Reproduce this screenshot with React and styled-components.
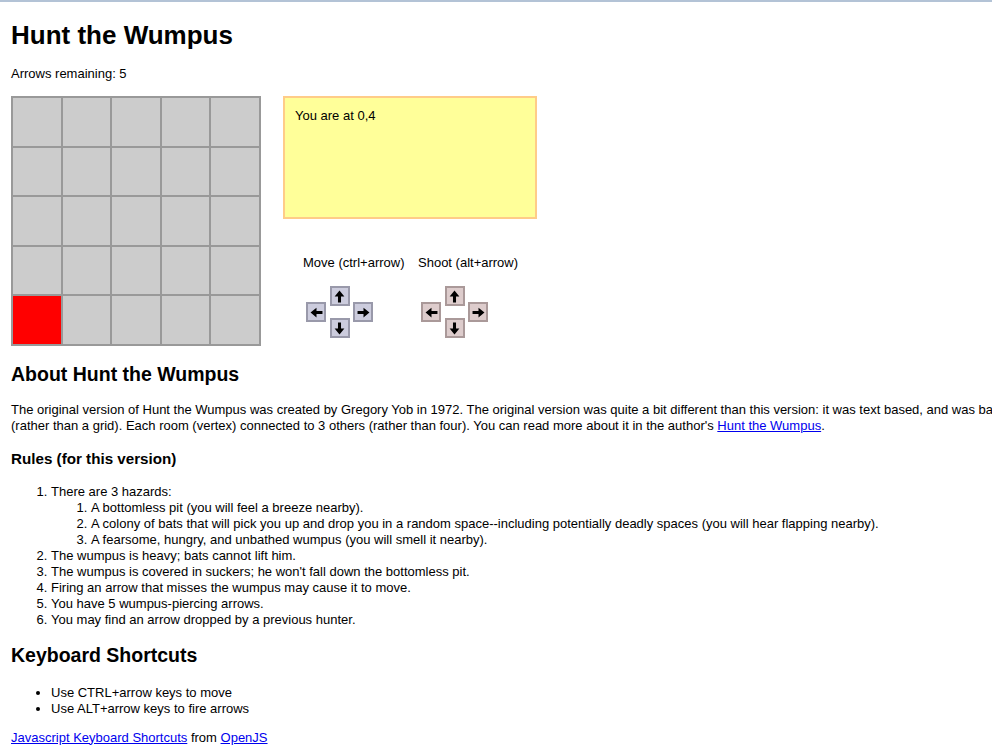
import React from 'react'
import styled, { createGlobalStyle } from 'styled-components'

const GlobalStyle = createGlobalStyle`
    html, body {
        margin: 0;
        padding: 0;
        overflow: hidden;
        background: #fff;
    }
    body {
        border-top: 2px solid #b3c3d6;
        font-family: "Liberation Sans", Arial, sans-serif;
        font-size: 13px;
        line-height: 16px;
        color: #000;
    }
`

const SIZE = 5
const here = { x: 0, y: 4 }

const App = () => {
  const cells = []
  for (let y = 0; y < SIZE; y++) {
    for (let x = 0; x < SIZE; x++) {
      cells.push(<Cell key={x + '-' + y} $current={x === here.x && y === here.y} />)
    }
  }

  return (
    <>
      <GlobalStyle />
      <Page>
        <Title>Hunt the Wumpus</Title>
        <Status>Arrows remaining: 5</Status>

        <GameRow>
          <Board>{cells}</Board>
          <Side>
            <Message>You are at {here.x},{here.y}</Message>
            <Controls>
              <ControlGroup>
                <ControlLabel>Move (ctrl+arrow)</ControlLabel>
                <DirPad kind="move" />
              </ControlGroup>
              <ControlGroup>
                <ControlLabel>Shoot (alt+arrow)</ControlLabel>
                <DirPad kind="shoot" />
              </ControlGroup>
            </Controls>
          </Side>
        </GameRow>

        <SectionHeading>About Hunt the Wumpus</SectionHeading>
        <Paragraph>
          The original version of Hunt the Wumpus was created by Gregory Yob in 1972. The original version was quite a bit
          different than this version: it was text based, and was based on a dodecahedron (rather than a grid). Each room
          (vertex) connected to 3 others (rather than four). You can read more about it in the author's{' '}
          <Link href="#">Hunt the Wumpus</Link>.
        </Paragraph>

        <SubHeading>Rules (for this version)</SubHeading>
        <RuleList>
          <li>
            There are 3 hazards:
            <NestedList>
              <li>A bottomless pit (you will feel a breeze nearby).</li>
              <li>A colony of bats that will pick you up and drop you in a random space--including potentially deadly spaces (you will hear flapping nearby).</li>
              <li>A fearsome, hungry, and unbathed wumpus (you will smell it nearby).</li>
            </NestedList>
          </li>
          <li>The wumpus is heavy; bats cannot lift him.</li>
          <li>The wumpus is covered in suckers; he won't fall down the bottomless pit.</li>
          <li>Firing an arrow that misses the wumpus may cause it to move.</li>
          <li>You have 5 wumpus-piercing arrows.</li>
          <li>You may find an arrow dropped by a previous hunter.</li>
        </RuleList>

        <ShortcutHeading>Keyboard Shortcuts</ShortcutHeading>
        <BulletList>
          <li>Use CTRL+arrow keys to move</li>
          <li>Use ALT+arrow keys to fire arrows</li>
        </BulletList>

        <Footer>
          <Link href="#">Javascript Keyboard Shortcuts</Link> from <Link href="#">OpenJS</Link>
        </Footer>
      </Page>
    </>
  )
}

const Arrow = ({ turn }) => (
  <svg width="13" height="13" viewBox="0 0 12 12" style={{ transform: `rotate(${turn}deg)` }}>
    <path d="M6 0.5 L10.5 6 H7.4 V11.5 H4.6 V6 H1.5 Z" fill="#000" />
  </svg>
)

const DirPad = ({ kind }) => (
  <Pad>
    <PadButton $kind={kind} $col={2} $row="1 / 6"><Arrow turn={0} /></PadButton>
    <PadButton $kind={kind} $col={1} $row="5 / 10"><Arrow turn={-90} /></PadButton>
    <PadButton $kind={kind} $col={3} $row="5 / 10"><Arrow turn={90} /></PadButton>
    <PadButton $kind={kind} $col={2} $row="9 / 14"><Arrow turn={180} /></PadButton>
  </Pad>
)

export default App

const Page = styled.div`
    width: 1140px;
    padding: 0 0 20px 11px;
`

const Title = styled.h1`
    margin: 18px 0 0;
    font-size: 26px;
    line-height: 30px;
    font-weight: bold;
`

const Status = styled.p`
    margin: 16px 0 0;
`

const GameRow = styled.div`
    display: flex;
    align-items: flex-start;
    gap: 22px;
    margin-top: 14px;
`

const Board = styled.div`
    display: grid;
    grid-template-columns: repeat(5, 1fr);
    grid-template-rows: repeat(5, 1fr);
    gap: 2px;
    padding: 2px;
    width: 250px;
    height: 250px;
    box-sizing: border-box;
    background: #999999;
`

const Cell = styled.div`
    background: ${p => (p.$current ? '#ff0000' : '#cccccc')};
`

const Side = styled.div`
    display: flex;
    flex-direction: column;
`

const Message = styled.div`
    width: 254px;
    height: 123px;
    box-sizing: border-box;
    padding: 10px 10px;
    background: #ffff99;
    border: 2px solid #ffcc88;
`

const Controls = styled.div`
    display: flex;
    gap: 16px;
    margin-top: 36px;
    padding-left: 20px;
`

const ControlGroup = styled.div`
    display: flex;
    flex-direction: column;
    gap: 15px;
    width: 99px;
`

const ControlLabel = styled.div`
    white-space: nowrap;
`

const Pad = styled.div`
    display: grid;
    grid-template-columns: 20px 20px 20px;
    grid-template-rows: repeat(13, 4px);
    column-gap: 3.5px;
    margin-left: 3px;
`

const PadButton = styled.div`
    grid-column: ${p => p.$col};
    grid-row: ${p => p.$row};
    box-sizing: border-box;
    width: 20px;
    height: 20px;
    display: flex;
    align-items: center;
    justify-content: center;
    background: ${p => (p.$kind === 'shoot' ? '#ddcccc' : '#ccccdd')};
    border: 2px solid ${p => (p.$kind === 'shoot' ? '#aa9999' : '#9999aa')};
`

const SectionHeading = styled.h2`
    margin: 17px 0 0;
    font-size: 19.5px;
    line-height: 22px;
    font-weight: bold;
`

const ShortcutHeading = styled(SectionHeading)`
    margin-top: 15.5px;
`

const Paragraph = styled.p`
    margin: 17px 0 0;
`

const SubHeading = styled.h3`
    margin: 16px 0 0;
    font-size: 15.2px;
    line-height: 18px;
    font-weight: bold;
`

const RuleList = styled.ol`
    margin: 16px 0 0;
    padding-left: 40px;
`

const NestedList = styled.ol`
    margin: 0;
    padding-left: 40px;
`

const BulletList = styled.ul`
    margin: 19.5px 0 0;
    padding-left: 40px;
`

const Footer = styled.p`
    margin: 12.5px 0 0;
`

const Link = styled.a`
    color: #0000ee;
    text-decoration: underline;
`
